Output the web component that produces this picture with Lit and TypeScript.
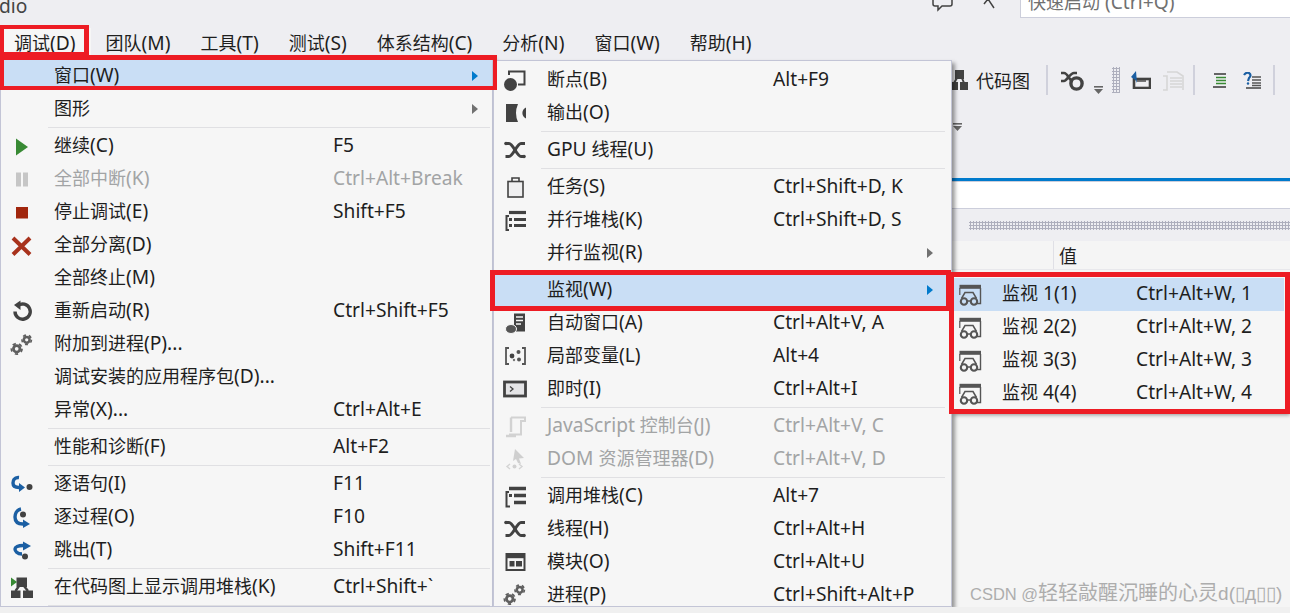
import { LitElement, html, css, svg } from "lit";
import { customElement } from "lit/decorators.js";

const D = "#424242";
const B = "#1b5fa3";
const G = "#388a34";

const gear = (cx: number, cy: number, r: number, c = "#5f5f5f") => svg`
  <circle cx=${cx} cy=${cy} r=${r * 0.58} fill="none" stroke=${c} stroke-width=${r * 0.5}/>
  <circle cx=${cx} cy=${cy} r=${r * 0.95} fill="none" stroke=${c} stroke-width=${r * 0.32} stroke-dasharray="${r * 0.6} ${r * 0.6}"/>`;

const threads = svg`<g fill="none" stroke=${D} stroke-width="3">
  <path d="M2.5 5.5H6C10 5.5 14 18.5 18 18.5H22"/>
  <path d="M2.5 18.5H6C10 18.5 14 5.5 18 5.5H22"/></g>
  <circle cx="3" cy="5.5" r="1.8" fill=${D}/><circle cx="21" cy="18.5" r="1.8" fill=${D}/>`;

const watch = svg`<g fill="none" stroke="#555">
   <path d="M1.5 3.8H23" stroke-width="4"/>
   <path d="M22.5 5V20.5H18.5" stroke-width="1.4"/>
   <path d="M1.8 5V12" stroke-width="1.2"/>
   <circle cx="6" cy="18.5" r="3.2" stroke-width="2.1"/>
   <circle cx="16" cy="18.5" r="3.2" stroke-width="2.1"/>
   <path d="M9 18h4M3.5 15.5L7 9.5H15L18.5 15.5" stroke-width="1.5"/></g>`;

const icons: Record<string, unknown> = {
  play: svg`<path d="M6 3.5L18 12L6 20.5Z" fill=${G}/>`,
  pause: svg`<path d="M6 4.5h5v14H6zM13 4.5h5v14h-5z" fill="#c6c6c6"/>`,
  stop: svg`<rect x="6" y="6" width="12" height="11.5" fill="#a1260d"/>`,
  x: svg`<path d="M3 4L20 20.5M20 4L3 20.5" stroke="#a8321c" stroke-width="4" fill="none"/>`,
  restart: svg`<path d="M8 5.5A7.6 7.6 0 1 1 5 11.5" fill="none" stroke=${D} stroke-width="3.4"/><path d="M10.5 0.5V10L4 5Z" fill=${D}/>`,
  gears: svg`${gear(6.7, 15.8, 5.6)}${gear(16.7, 6.8, 5)}`,
  into: svg`<path d="M9 4.5C4 4 3 8 3 10C3 13 5 14.5 9 14.5" fill="none" stroke=${B} stroke-width="3.4"/><path d="M9 10L15 14.5L9 19Z" fill=${B}/><circle cx="19.5" cy="14" r="3" fill=${D}/>`,
  over: svg`<path d="M11 3C6 4 5 9 5 11C5 15 7 18 13 18" fill="none" stroke=${B} stroke-width="3.4"/><path d="M13 13.5L20 18L13 22Z" fill=${B}/><circle cx="13" cy="8.5" r="3" fill=${D}/>`,
  out: svg`<path d="M12 15C7 15 5 12 5 10C5 8 8 6.5 13 6.5" fill="none" stroke=${B} stroke-width="3.4"/><path d="M13 2.5L21 7L13 11.5Z" fill=${B}/><circle cx="15" cy="17.5" r="3" fill=${D}/>`,
  map: svg`<rect x="6.5" y="1.5" width="10.5" height="9.5" fill=${D}/><rect x="1" y="14.5" width="9.5" height="7.5" fill=${D}/><rect x="13" y="14.5" width="10" height="7.5" fill=${D}/><path d="M9 10L5.5 15M14 10L18 15" stroke=${D} stroke-width="2.4"/><path d="M1 1.5L7 6L1 10.5Z" fill=${G}/>`,
  bp: svg`<path d="M6 7V3.5H21.5V16.5H15" fill="none" stroke=${D} stroke-width="2"/><circle cx="7.5" cy="16.5" r="6.5" fill=${D}/>`,
  output: svg`<path d="M3 3H15Q11 12 15 21H3Z" fill=${D}/><path d="M23 6.5V17.5A6 6 0 0 1 23 6.5Z" fill=${D}/>`,
  threads,
  tasks: svg`<rect x="5" y="6.5" width="15" height="15.5" fill="#efeff0" stroke=${D} stroke-width="1.6"/><path d="M9 6.5V3H16V6.5" fill="none" stroke=${D} stroke-width="1.6"/>`,
  pstacks: svg`<path d="M6 4.5H23" stroke=${D} stroke-width="3.2"/><path d="M11 11.5H23M11 17.5H23" stroke=${D} stroke-width="3.2"/><path d="M6 11.5H9M6 17.5H9" stroke=${D} stroke-width="3.2"/><path d="M6 8H3.5V22H6" fill="none" stroke=${D} stroke-width="2"/>`,
  auto: svg`<rect x="11" y="2.5" width="11" height="18" fill=${D}/><path d="M13 6h7M13 9.5h7M13 13h5" stroke="#f6f6f6" stroke-width="1.4"/><ellipse cx="8" cy="18" rx="5.5" ry="4.5" fill="#555" stroke="#f6f6f6"/>`,
  locals: svg`<path d="M6 4H3V20H6M19 4H22V20H19" fill="none" stroke="#555" stroke-width="1.8"/><circle cx="9" cy="12" r="2.4" fill=${D}/><circle cx="15.5" cy="8" r="2" fill="#555"/><circle cx="16" cy="15.5" r="2" fill="#555"/><circle cx="11" cy="16" r="1.2" fill="#777"/>`,
  imm: svg`<rect x="1.5" y="5" width="21" height="14" fill="#e4e4e6" stroke=${D} stroke-width="2.8"/><path d="M7 9.5L10 12L7 14.5" fill="none" stroke=${D} stroke-width="1.3"/>`,
  js: svg`<path d="M8 3.5H22V7H18V20.5H6" fill="none" stroke="#d2d2d2" stroke-width="2"/><path d="M8 3.5V18M3 22H13" stroke="#d2d2d2" stroke-width="2.4"/>`,
  dom: svg`<path d="M12 2L21 11L16 11.5L18 17L15 16L13 12L10 14Z" fill="#cfcfcf"/><path d="M7 17L4 19.5L7 22M16 17L19 19.5L16 22" fill="none" stroke="#d4d4d4" stroke-width="1.4"/><circle cx="11.5" cy="19.5" r="2" fill="#d0d0d0"/>`,
  stack: svg`<path d="M6 4.5H23M11 11.5H23M11 18.5H23" stroke=${D} stroke-width="3.6"/><path d="M6 8H3.5V22.5H7" fill="none" stroke=${D} stroke-width="2"/><path d="M6 11.5H9" stroke=${D} stroke-width="3"/>`,
  mods: svg`<rect x="3.5" y="4" width="18" height="16" fill="none" stroke=${D} stroke-width="2"/><path d="M3 6.5H22" stroke=${D} stroke-width="3.4"/><rect x="6.5" y="11" width="5" height="5.5" fill=${D}/><rect x="13" y="11" width="6" height="5.5" fill=${D}/>`,
  watch,
};

type Item = { t?: string; s?: string; i?: string; hl?: boolean; dis?: boolean; sub?: boolean; first?: boolean };

const SEP: Item = {};

const menu1: Item[] = [
  { t: "窗口(W)", hl: true, sub: true, first: true },
  { t: "图形", sub: true },
  SEP,
  { t: "继续(C)", s: "F5", i: "play" },
  { t: "全部中断(K)", s: "Ctrl+Alt+Break", i: "pause", dis: true },
  { t: "停止调试(E)", s: "Shift+F5", i: "stop" },
  { t: "全部分离(D)", i: "x" },
  { t: "全部终止(M)" },
  { t: "重新启动(R)", s: "Ctrl+Shift+F5", i: "restart" },
  { t: "附加到进程(P)...", i: "gears" },
  { t: "调试安装的应用程序包(D)..." },
  { t: "异常(X)...", s: "Ctrl+Alt+E" },
  SEP,
  { t: "性能和诊断(F)", s: "Alt+F2" },
  SEP,
  { t: "逐语句(I)", s: "F11", i: "into" },
  { t: "逐过程(O)", s: "F10", i: "over" },
  { t: "跳出(T)", s: "Shift+F11", i: "out" },
  SEP,
  { t: "在代码图上显示调用堆栈(K)", s: "Ctrl+Shift+`", i: "map" },
  SEP,
];

const menu2: Item[] = [
  { t: "断点(B)", s: "Alt+F9", i: "bp" },
  { t: "输出(O)", i: "output" },
  SEP,
  { t: "GPU 线程(U)", i: "threads" },
  SEP,
  { t: "任务(S)", s: "Ctrl+Shift+D, K", i: "tasks" },
  { t: "并行堆栈(K)", s: "Ctrl+Shift+D, S", i: "pstacks" },
  { t: "并行监视(R)", sub: true },
  SEP,
  { t: "监视(W)", hl: true, sub: true },
  { t: "自动窗口(A)", s: "Ctrl+Alt+V, A", i: "auto" },
  { t: "局部变量(L)", s: "Alt+4", i: "locals" },
  { t: "即时(I)", s: "Ctrl+Alt+I", i: "imm" },
  SEP,
  { t: "JavaScript 控制台(J)", s: "Ctrl+Alt+V, C", i: "js", dis: true },
  { t: "DOM 资源管理器(D)", s: "Ctrl+Alt+V, D", i: "dom", dis: true },
  SEP,
  { t: "调用堆栈(C)", s: "Alt+7", i: "stack" },
  { t: "线程(H)", s: "Ctrl+Alt+H", i: "threads" },
  { t: "模块(O)", s: "Ctrl+Alt+U", i: "mods" },
  { t: "进程(P)", s: "Ctrl+Shift+Alt+P", i: "gears" },
];

const menu3: Item[] = [
  { t: "监视 1(1)", s: "Ctrl+Alt+W, 1", i: "watch", hl: true },
  { t: "监视 2(2)", s: "Ctrl+Alt+W, 2", i: "watch" },
  { t: "监视 3(3)", s: "Ctrl+Alt+W, 3", i: "watch" },
  { t: "监视 4(4)", s: "Ctrl+Alt+W, 4", i: "watch" },
];

const bar = ["调试(D)", "团队(M)", "工具(T)", "测试(S)", "体系结构(C)", "分析(N)", "窗口(W)", "帮助(H)"];

/* Latin runs are set slightly larger, as the reference's Latin face is wider than its CJK em. */
const lat = (s: string) =>
  s.split(/([\u4e00-\u9fff]+)/).map((p, i) => (i % 2 ? p : p ? html`<span class="la">${p}</span>` : ""));

@customElement("app-root")
export class AppRoot extends LitElement {
  static styles = css`
    :host {
      display: flex;
      flex-direction: column;
      position: relative;
      width: 1290px;
      height: 613px;
      overflow: hidden;
      background: #eeeef2;
      color: #1e1e1e;
      font-family: "Noto Sans", "Noto Sans CJK SC", sans-serif;
      font-size: 18px;
    }
    .la { font-size: 19.2px; }
    .title { height: 28px; flex: none; display: flex; overflow: hidden; }
    .dio { line-height: 12px; height: 14px; width: 26px; flex: none; margin-left: -1px; color: #444; }
    .fb { margin-left: 907px; display: block; flex: none; }
    .arm { margin-left: 29px; display: block; flex: none; }
    .search {
      margin-left: 25px; flex: 1; height: 18px; box-sizing: border-box;
      background: #fff; border-left: 1px solid #cccedb; border-bottom: 1px solid #cccedb;
      padding-left: 7px; line-height: 4px; color: #717171; overflow: hidden; white-space: nowrap;
    }
    .bar { height: 30px; flex: none; display: flex; margin-left: -1px; }
    .bar > span { padding: 0 15px; line-height: 30px; white-space: nowrap; }
    .bar .on { background: #f6f6f6; }

    .tools { height: 120px; flex: none; box-sizing: border-box; padding-top: 7px; }
    .t1 { display: flex; align-items: center; height: 30px; padding-left: 950px; }
    .t1 svg { display: block; flex: none; }
    .t1 .txt { width: 54px; margin-left: 8px; white-space: nowrap; }
    .t1 .low { align-self: flex-end; }
    .vs { width: 2px; height: 30px; background: #d0d1dc; flex: none; }
    .m9 { margin-left: 9px; } .m10 { margin-left: 10px; } .m11 { margin-left: 11px; }
    .m12 { margin-left: 12px; } .m13 { margin-left: 13px; } .m16 { margin-left: 16px; }
    .grip {
      background-image: radial-gradient(#aeafbd 1px, transparent 1.2px);
      background-size: 3px 3px;
    }
    .grip.v { width: 8px; height: 26px; flex: none; }
    .t2 { margin: 28px 0 0 953px; display: block; }

    .blue { height: 4px; box-sizing: border-box; flex: none; background: #007acc; border-bottom: 1px solid #cccedb; }
    .white { height: 27px; box-sizing: border-box; flex: none; background: #fff; border-bottom: 1px solid #cccedb; }
    .dock { height: 32px; flex: none; display: flex; align-items: center; padding-left: 969px; }
    .dock .grip { flex: 1; height: 9px; }
    .col { height: 29px; flex: none; background: #f5f5f5; display: flex; padding-left: 1053px; border-bottom: 1px solid #e8e8ec; box-sizing: border-box; }
    .col span { border-left: 1px solid #e0e0e6; padding-left: 5px; line-height: 30px; }
    .fill { flex: 1; background: #f5f5f5; }
    .strip { height: 6px; flex: none; background: #f0f0f0; position: relative; z-index: 5; }

    .menu {
      position: absolute; box-sizing: border-box; background: #f6f6f6;
      border: 1px solid #c3c5d6; box-shadow: 3px 3px 4px rgba(0, 0, 0, 0.4); overflow: hidden;
    }
    .m-a { left: 0; top: 56px; width: 493px; height: 551px; padding-top: 2px; z-index: 2; --pad: 9px; --ic: 53px; --lb: 279px; --sl: 47px; --sr: 2px; --ar: 14px; --tb: 2px; }
    .m-b { left: 493px; top: 60px; width: 459px; height: 547px; padding-top: 2px; z-index: 3; --pad: 9px; --ic: 53px; --lb: 226px; --sl: 47px; --sr: 6px; --ar: 18px; --tb: 2px; }
    .m-c { left: 951px; top: 275px; width: 336px; height: 137px; padding: 2px; z-index: 4; --pad: 4px; --ic: 48px; --lb: 134px; --tb: 4px; }

    .row { display: flex; align-items: center; height: 33px; white-space: nowrap; box-sizing: border-box; }
    .row.hl { background: #c9def5; }
    .row.first { height: 30px; padding-top: 3px; margin-bottom: 3px; }
    .row.dis { color: #a2a4a5; }
    .ic { width: var(--ic); box-sizing: border-box; padding-left: var(--pad); flex: none; display: flex; }
    .m-a .ic { margin-top: 2px; }
    .ic svg { width: 24px; height: 24px; display: block; }
    .lb, .sc { line-height: 24px; margin-bottom: var(--tb); }
    .lb { width: var(--lb); flex: none; }
    .ar {
      margin-left: auto; margin-right: var(--ar); width: 0; height: 0;
      border-left: 6px solid #717171; border-top: 5px solid transparent; border-bottom: 5px solid transparent;
    }
    .hl .ar { border-left-color: #007acc; }
    .sep { height: 4px; display: flex; align-items: center; padding: 0 var(--sr) 0 var(--sl); }
    .sep i { display: block; height: 1px; flex: 1; background: #e0e0e3; }

    .red { position: absolute; box-sizing: border-box; border: 4px solid #ed1c24; z-index: 6; }
    .r1 { left: 0; top: 25px; width: 89px; height: 31px; border-right-width: 5px; }
    .r2 { left: 0; top: 55px; width: 497px; height: 35px; border-top-width: 5px; }
    .r3 { left: 490px; top: 270px; width: 461px; height: 41px; border-width: 5px; }
    .r4 { left: 949px; top: 272px; width: 341px; height: 142px; border-width: 5px; }

    .mark {
      position: absolute; left: 970px; top: 581px; z-index: 7; white-space: nowrap; color: #adadad;
      font-family: "Liberation Sans", "Noto Sans CJK SC", sans-serif; font-size: 16.5px; line-height: 24px;
    }
    .mark b { font-weight: 400; font-size: 20px; }
    .mark u { text-decoration: none; font-size: 19px; }
  `;

  private renderItem(it: Item) {
    if (!it.t) return html`<div class="sep"><i></i></div>`;
    const cls = ["row", it.hl ? "hl" : "", it.dis ? "dis" : "", it.first ? "first" : ""].join(" ");
    return html`<div class=${cls}>
      <span class="ic">${it.i ? html`<svg viewBox="0 0 24 24">${icons[it.i]}</svg>` : ""}</span>
      <span class="lb">${lat(it.t)}</span>
      ${it.s ? html`<span class="sc la">${it.s}</span>` : ""}
      ${it.sub ? html`<span class="ar"></span>` : ""}
    </div>`;
  }

  render() {
    return html`
      <div class="title">
        <span class="dio la">dio</span>
        <svg class="fb" width="22" height="12" viewBox="0 0 22 12"><path d="M1 -3V4Q1 6 3 6H6V10L10 6H18Q20 6 20 4V-3" fill="none" stroke="#424242" stroke-width="1.5"/></svg>
        <svg class="arm" width="12" height="10" viewBox="0 0 12 10"><path d="M1 4L5 -1L11 8" fill="none" stroke="#424242" stroke-width="1.5"/></svg>
        <div class="search">${lat("快速启动 (Ctrl+Q)")}</div>
      </div>
      <div class="bar">${bar.map((b, i) => html`<span class=${i === 0 ? "on" : ""}>${lat(b)}</span>`)}</div>
      <div class="tools">
        <div class="t1">
          <svg width="18" height="21" viewBox="0 0 18 21"><rect x="5" y="0" width="9" height="9" fill="#424242"/><rect x="0" y="12" width="8" height="8" fill="#424242"/><rect x="10" y="12" width="8" height="8" fill="#424242"/><path d="M7 8L4 13M12 8L14 13" stroke="#424242" stroke-width="2"/></svg>
          <span class="txt">代码图</span>
          <span class="vs m16"></span>
          <svg class="m13" width="23" height="21" viewBox="0 0 23 21"><g fill="none" stroke="#424242"><path d="M0 3H3C7 3 8 11 12 11" stroke-width="2.6"/><path d="M0 11H3C6 11 9 3 13 3H16" stroke-width="2.6"/><circle cx="15.5" cy="13.5" r="5.6" stroke-width="3.4"/></g></svg>
          <svg class="m10 low" width="9" height="9" viewBox="0 0 9 9"><path d="M0 .8H9" stroke="#666" stroke-width="1.6"/><path d="M0 3H9L4.5 8Z" fill="#666"/></svg>
          <span class="grip v m9"></span>
          <svg class="m11" width="20" height="18" viewBox="0 0 20 18"><rect x="3" y="8" width="16" height="9" fill="none" stroke="#424242" stroke-width="2.6"/><path d="M6 10H15" stroke="#424242" stroke-width="1.4"/><path d="M0 6L5 0L6 12L4.5 9Z" fill="#1b5fa3"/></svg>
          <svg class="m11" width="22" height="21" viewBox="0 0 22 21"><g fill="none" stroke="#d6d6d6" stroke-width="1.6"><path d="M1 6H5V20H1M5 2H15L21 6V20"/><path d="M8 8H20M8 11H20M8 14H20M8 17H20"/></g></svg>
          <span class="vs m9"></span>
          <svg class="m16" width="16" height="15" viewBox="0 0 16 15"><path d="M3 1H15" stroke="#424242" stroke-width="1.6"/><path d="M5 4.5H15M5 7.5H15M5 10.5H15" stroke="#388a34" stroke-width="1.6"/><path d="M2 14H15" stroke="#424242" stroke-width="1.6"/></svg>
          <svg class="m16" width="18" height="17" viewBox="0 0 18 17"><path d="M1 3Q3 0 6 1Q9 3 6 6L5 9" fill="none" stroke="#1b5fa3" stroke-width="2.2"/><circle cx="5" cy="11.5" r="1.2" fill="#1b5fa3"/><path d="M9 5H18M9 8H18M9 11H18M9 13.5H18" stroke="#555" stroke-width="1.3"/><path d="M3 16H18" stroke="#424242" stroke-width="1.5"/></svg>
          <span class="vs m12"></span>
        </div>
        <svg class="t2" width="9" height="9" viewBox="0 0 9 9"><path d="M0 .8H9" stroke="#666" stroke-width="1.6"/><path d="M0 3H9L4.5 8Z" fill="#666"/></svg>
      </div>
      <div class="blue"></div>
      <div class="white"></div>
      <div class="dock"><div class="grip"></div></div>
      <div class="col"><span>值</span></div>
      <div class="fill"></div>
      <div class="strip"></div>

      <div class="menu m-a">${menu1.map((i) => this.renderItem(i))}</div>
      <div class="menu m-b">${menu2.map((i) => this.renderItem(i))}</div>
      <div class="menu m-c">${menu3.map((i) => this.renderItem(i))}</div>

      <div class="red r1"></div>
      <div class="red r2"></div>
      <div class="red r3"></div>
      <div class="red r4"></div>
      <div class="mark">CSDN @<b>轻轻敲醒沉睡的心灵</b><u>d(▯д▯▯)</u></div>
    `;
  }
}
